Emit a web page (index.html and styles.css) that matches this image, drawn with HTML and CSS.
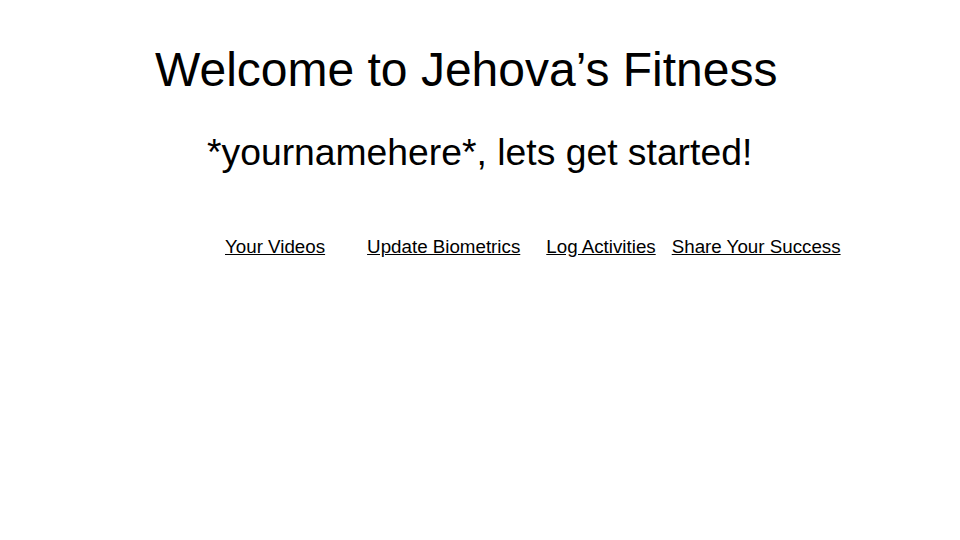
FILE: index.html
```html
<!DOCTYPE html>
<html lang="en">
<head>
<meta charset="utf-8">
<title>Jehova's Fitness</title>
<link rel="stylesheet" href="styles.css">
</head>
<body>
<main class="slide">
  <h1 class="title">Welcome to Jehova’s Fitness</h1>
  <p class="subtitle">*yournamehere*, lets get started!</p>
  <nav class="links">
    <a class="link link-videos" href="#">Your Videos</a>
    <a class="link link-bio" href="#">Update Biometrics</a>
    <a class="link link-log" href="#">Log Activities</a>
    <a class="link link-share" href="#">Share Your Success</a>
  </nav>
</main>
</body>
</html>
```
FILE: styles.css
```css
html, body {
  margin: 0;
  padding: 0;
  background: #ffffff;
}
.slide {
  width: 960px;
  height: 540px;
  display: flex;
  flex-direction: column;
  align-items: flex-start;
  font-family: "Liberation Sans", Arial, sans-serif;
  color: #000000;
}
.title {
  margin: 0;
  padding: 42px 0 0 155px;
  font-size: 48px;
  font-weight: normal;
  line-height: 56px;
}
.subtitle {
  margin: 0;
  padding: 32px 0 0 207px;
  font-size: 37.3px;
  line-height: 44px;
}
.links {
  display: flex;
  padding: 62px 0 0 225px;
  font-size: 18.75px;
  line-height: 22px;
}
.link {
  color: #000000;
  text-decoration: underline;
}
.link-bio { margin-left: 42px; }
.link-log { margin-left: 26px; }
.link-share { margin-left: 16px; }
```
